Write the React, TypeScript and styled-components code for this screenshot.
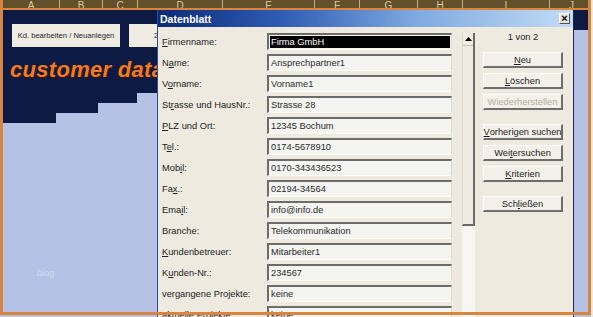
import React from 'react';
import styled, { createGlobalStyle } from 'styled-components';

const GlobalStyle = createGlobalStyle`
  html, body { margin: 0; padding: 0; background: #efe9dd; }
  body { font-family: "Liberation Sans", Arial, sans-serif; }
  u { text-decoration-thickness: 1px; text-underline-offset: 1px; }
`;

const Screen = styled.div`
  position: relative;
  width: 593px;
  height: 317px;
  overflow: hidden;
  display: flex;
  flex-direction: column;
  background: #efe9dd;
`;

const Frame = styled.div`
  position: absolute;
  left: 0;
  top: 0;
  width: 591px;
  height: 315px;
  box-sizing: border-box;
  border: 3px solid #d9843f;
  border-top: none;
  pointer-events: none;
`;

const ColumnStrip = styled.div`
  display: flex;
  width: 591px;
  height: 8px;
  flex-shrink: 0;
  overflow: hidden;
  background: #62502a;
  border-bottom: 2px solid #d9843f;
`;

const ColumnCell = styled.div<{ $w: number }>`
  width: ${p => p.$w}px;
  flex-shrink: 0;
  height: 8px;
  box-sizing: border-box;
  padding-top: 1px;
  border-right: 1px solid #c7ad78;
  color: #d9c9a0;
  font-size: 10px;
  line-height: 10px;
  text-align: center;
  overflow: hidden;
`;

const Sheet = styled.div`
  position: relative;
  flex: 1;
  display: flex;
  width: 591px;
  overflow: hidden;
`;

const LeftSheet = styled.div`
  flex: 1;
  display: flex;
  flex-direction: column;
  background: #b5c1e5;
`;

const NavyTop = styled.div`
  height: 83px;
  box-sizing: border-box;
  padding: 14px 0 0 12px;
  background: #0d1a44;
`;

const ButtonRow = styled.div`
  display: flex;
  gap: 9px;
`;

const SheetButton = styled.div<{ $w: number }>`
  width: ${p => p.$w}px;
  height: 23px;
  display: flex;
  align-items: center;
  justify-content: ${p => (p.$w > 80 ? 'center' : 'flex-start')};
  padding-left: ${p => (p.$w > 80 ? 0 : 25)}px;
  box-sizing: border-box;
  background: #efece4;
  color: #1e1e1e;
  font-size: 7.6px;
  white-space: nowrap;
`;

const Brand = styled.div`
  margin: 12px 0 0 -2px;
  font-size: 22px;
  line-height: 22px;
  font-weight: bold;
  font-style: italic;
  letter-spacing: 0.3px;
  color: #f07a26;
  text-shadow: 1px 1px 0 #3b1800;
  white-space: nowrap;
`;

const Step = styled.div<{ $w: number }>`
  width: ${p => p.$w}px;
  height: 10px;
  background: #0d1a44;
`;

const BlogMark = styled.div`
  margin: 145px 0 0 37px;
  font-size: 9px;
  line-height: 10px;
  color: #d4dcf2;
`;

const RightStrip = styled.div`
  width: 17px;
  display: flex;
  flex-direction: column;
  background: #b5c1e5;
`;

const RightNavy = styled.div`
  height: 20px;
  background: #0d1a44;
`;

const Dialog = styled.div`
  position: absolute;
  left: 157px;
  top: 0;
  width: 417px;
  height: 330px;
  box-sizing: border-box;
  border-left: 1px solid #2b4c9c;
  border-right: 1px solid #1b2450;
  background: #eeeae0;
`;

const TitleBar = styled.div`
  height: 17px;
  display: flex;
  align-items: center;
  justify-content: space-between;
  padding: 0 3px 0 2px;
  background: linear-gradient(90deg, #0c2a78 0%, #2f5db3 30%, #7fa9e0 62%, #c2dcf5 100%);
`;

const TitleText = styled.span`
  color: #fff;
  font-size: 10.5px;
  font-weight: bold;
`;

const CloseButton = styled.div`
  width: 11px;
  height: 11px;
  display: flex;
  align-items: center;
  justify-content: center;
  box-sizing: border-box;
  background: #e6e2d8;
  border-top: 1px solid #fff;
  border-left: 1px solid #fff;
  border-right: 1px solid #555;
  border-bottom: 1px solid #555;
  color: #000;
  font-size: 11px;
  font-weight: bold;
  line-height: 9px;
`;

const Body = styled.div`
  display: flex;
  padding: 6px 0 0 4px;
`;

const Fields = styled.div`
  display: flex;
  flex-direction: column;
  gap: 4px;
`;

const Row = styled.div`
  display: flex;
  align-items: center;
  height: 17px;
`;

const Label = styled.div`
  width: 105px;
  color: #222;
  font-size: 9.3px;
  white-space: nowrap;
`;

const Field = styled.div<{ $selected?: boolean }>`
  width: 185px;
  height: 17px;
  box-sizing: border-box;
  display: flex;
  align-items: center;
  padding-left: 2px;
  border-top: 2px solid #6c6c6c;
  border-left: 2px solid #6c6c6c;
  border-right: 1px solid #dcd8cc;
  border-bottom: 1px solid #fbfbf8;
  background: #f4f4f1;
  color: #2a2a2a;
  font-size: 9.3px;
  white-space: nowrap;

  ${p =>
    p.$selected &&
    `
    background: #000;
    color: #fff;
    box-shadow: inset 0 0 0 1px #f4f4f1;
  `}
`;

const ScrollColumn = styled.div`
  width: 13px;
  margin-left: 10px;
  display: flex;
  flex-direction: column;
  background: #f7f6f2;
`;

const ScrollTrack = styled.div`
  height: 193px;
  box-sizing: border-box;
  display: flex;
  flex-direction: column;
  align-items: center;
  background: #efebe2;
  border-left: 1px solid #dcd8cc;
  border-right: 2px solid #6a6a6a;
  border-bottom: 2px solid #6a6a6a;
`;

const ScrollArrow = styled.div`
  width: 100%;
  height: 12px;
  display: flex;
  align-items: center;
  justify-content: center;
  border-bottom: 1px solid #c8c4b8;
`;

const Side = styled.div`
  width: 80px;
  margin-left: 8px;
  display: flex;
  flex-direction: column;
`;

const Counter = styled.div`
  margin-top: -2px;
  height: 12px;
  line-height: 12px;
  text-align: center;
  color: #222;
  font-size: 9.3px;
`;

const ButtonGroup = styled.div<{ $top: number }>`
  display: flex;
  flex-direction: column;
  gap: 5px;
  margin-top: ${p => p.$top}px;
`;

const DialogButton = styled.div<{ $disabled?: boolean }>`
  height: 16px;
  box-sizing: border-box;
  display: flex;
  align-items: center;
  justify-content: center;
  background: #f3f0e9;
  border-top: 1px solid #fff;
  border-left: 1px solid #fff;
  border-right: 2px solid #6e6e6e;
  border-bottom: 2px solid #6e6e6e;
  color: ${p => (p.$disabled ? '#b3afa4' : '#1c1c1c')};
  font-size: 9.3px;
  white-space: nowrap;
`;

const columns: [string, number][] = [
  ['A', 57], ['B', 43], ['C', 35], ['D', 85], ['E', 92], ['F', 45],
  ['G', 58], ['H', 45], ['I', 87], ['J', 44],
];

const fields: [React.ReactNode, string][] = [
  [<><u>F</u>irmenname:</>, 'Firma GmbH'],
  [<>N<u>a</u>me:</>, 'Ansprechpartner1'],
  [<>V<u>o</u>rname:</>, 'Vorname1'],
  [<>St<u>r</u>asse und HausNr.:</>, 'Strasse 28'],
  [<><u>P</u>LZ und Ort:</>, '12345 Bochum'],
  [<>T<u>e</u>l.:</>, '0174-5678910'],
  [<>Mob<u>i</u>l:</>, '0170-343436523'],
  [<>Fa<u>x</u>.:</>, '02194-34564'],
  [<>Ema<u>i</u>l:</>, 'info@info.de'],
  [<>Branche:</>, 'Telekommunikation'],
  [<><u>K</u>undenbetreuer:</>, 'Mitarbeiter1'],
  [<>K<u>u</u>nden-Nr.:</>, '234567'],
  [<>ver<u>g</u>angene Projekte:</>, 'keine'],
  [<>aktuelle Projekte:</>, 'keine'],
];

export default function App() {
  return (
    <Screen>
      <GlobalStyle />
      <ColumnStrip>
        <ColumnCell $w={3} />
        {columns.map(([c, w]) => (
          <ColumnCell key={c} $w={w}>{c}</ColumnCell>
        ))}
      </ColumnStrip>
      <Sheet>
        <LeftSheet>
          <NavyTop>
            <ButtonRow>
              <SheetButton $w={108}>Kd. bearbeiten / Neuanlegen</SheetButton>
              <SheetButton $w={60}>2. Übersicht</SheetButton>
            </ButtonRow>
            <Brand>customer data</Brand>
          </NavyTop>
          <Step $w={137} />
          <Step $w={98} />
          <Step $w={56} />
          <BlogMark>blog</BlogMark>
        </LeftSheet>
        <RightStrip>
          <RightNavy />
        </RightStrip>

        <Dialog>
          <TitleBar>
            <TitleText>Datenblatt</TitleText>
            <CloseButton>×</CloseButton>
          </TitleBar>
          <Body>
            <Fields>
              {fields.map(([label, value], i) => (
                <Row key={i}>
                  <Label>{label}</Label>
                  <Field $selected={i === 0}>{value}</Field>
                </Row>
              ))}
            </Fields>
            <ScrollColumn>
              <ScrollTrack>
                <ScrollArrow>
                  <svg width="7" height="4" viewBox="0 0 7 4">
                    <path d="M0 4 L3.5 0 L7 4 Z" fill="#000" />
                  </svg>
                </ScrollArrow>
              </ScrollTrack>
            </ScrollColumn>
            <Side>
              <Counter>1 von 2</Counter>
              <ButtonGroup $top={9}>
                <DialogButton><u>N</u>eu</DialogButton>
                <DialogButton><u>L</u>öschen</DialogButton>
                <DialogButton $disabled>Wiederherstellen</DialogButton>
              </ButtonGroup>
              <ButtonGroup $top={14}>
                <DialogButton><u>V</u>orherigen suchen</DialogButton>
                <DialogButton>Wei<u>t</u>ersuchen</DialogButton>
                <DialogButton><u>K</u>riterien</DialogButton>
              </ButtonGroup>
              <ButtonGroup $top={14}>
                <DialogButton>Sch<u>l</u>ießen</DialogButton>
              </ButtonGroup>
            </Side>
          </Body>
        </Dialog>
      </Sheet>
      <Frame />
    </Screen>
  );
}
